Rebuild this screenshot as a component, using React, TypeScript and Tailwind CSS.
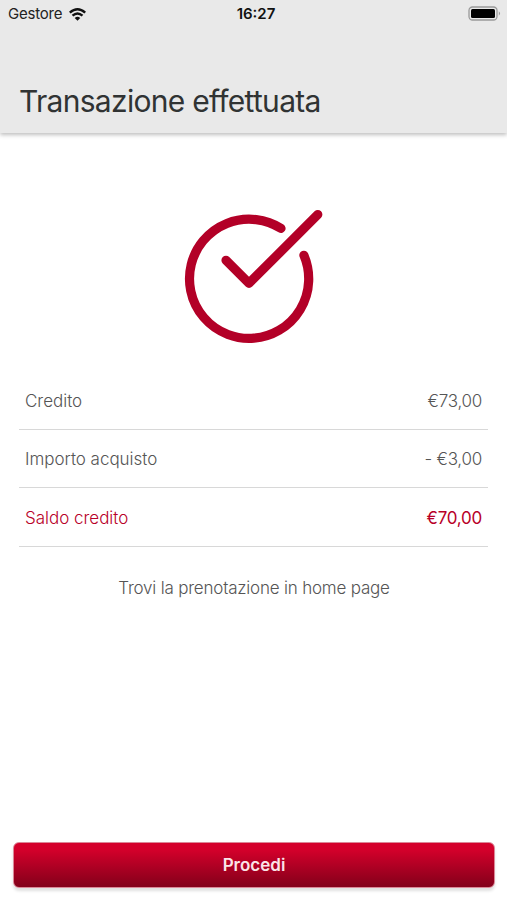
import clsx from 'clsx'

type Row = {
  label: string
  amount: string
  highlighted?: boolean
}

const rows: Row[] = [
  { label: 'Credito', amount: '€73,00' },
  { label: 'Importo acquisto', amount: '- €3,00' },
  { label: 'Saldo credito', amount: '€70,00', highlighted: true },
]

export default function App() {
  return (
    <div className="flex h-[900px] w-[507px] flex-col overflow-hidden bg-white font-['Inter',sans-serif]">
      <header className="h-[133px] shrink-0 bg-[#e9e9e9] shadow-[0_2px_4px_0_rgba(0,0,0,0.25)]">
        <StatusBar />
        <h1 className="mt-[53px] pl-[19px] text-[30px] leading-10 tracking-[-0.7px] text-[#303333]">
          Transazione effettuata
        </h1>
      </header>

      <main className="flex flex-1 flex-col items-center px-[19px]">
        <CheckIcon />
        <ul className="mt-[23px] w-full">
          {rows.map(row => (
            <SummaryRow key={row.label} {...row} />
          ))}
        </ul>
        <p className="mt-[29px] pl-px text-[17px] leading-6 font-light tracking-[-0.2px] text-[#555]">
          Trovi la prenotazione in home page
        </p>
      </main>

      <footer className="px-[13px] pb-3">
        <button className="block h-[46px] w-[482px] rounded-md border border-[#dc8797] bg-linear-to-b from-[#d4002b] from-15% to-[#83001a] pt-[2px] text-[17px] font-semibold text-[#fbe4e8] shadow-[0_3px_3px_rgba(0,0,0,0.12)]">
          Procedi
        </button>
      </footer>
    </div>
  )
}

function StatusBar() {
  return (
    <div className="grid h-7 grid-cols-3 items-center pr-[6px] pl-2 text-[15px] text-[#222]">
      <div className="flex items-center gap-[7px]">
        <span className="tracking-[-0.2px]">Gestore</span>
        <WifiIcon />
      </div>
      <span className="pl-[3px] text-center font-semibold text-[#111]">
        16:27
      </span>
      <BatteryIcon />
    </div>
  )
}

function SummaryRow({ label, amount, highlighted }: Row) {
  return (
    <li
      className={clsx(
        'flex h-[58.6px] items-center justify-between border-b border-[#d8d8d8] px-[6px] pt-[3px] text-[17px]',
        highlighted ? 'text-[#b80028]' : 'text-[#555]',
      )}
    >
      <span className="font-light tracking-[-0.02px]">{label}</span>
      <span
        className={clsx(
          'tracking-[-0.25px]',
          highlighted ? 'font-normal' : 'font-light',
        )}
      >
        {amount}
      </span>
    </li>
  )
}

function CheckIcon() {
  return (
    <svg
      className="mt-[73px] h-[142px] w-[147px]"
      viewBox="0 0 147 142"
      fill="none"
      stroke="#b30027"
      strokeWidth="9.2"
      strokeLinecap="round"
      strokeLinejoin="round"
    >
      <path d="M101 22.4A59.6 59.6 0 1 0 123.9 49.3" />
      <path d="M46 54.3L69 77.3L137.8 8.6" />
    </svg>
  )
}

function WifiIcon() {
  return (
    <svg
      className="h-[13px] w-[17px]"
      viewBox="0 0 17 13"
      fill="none"
      stroke="#111"
      strokeWidth="2.4"
    >
      <path d="M0.8 4.7Q8.5 -2.1 16.2 4.7" />
      <path d="M3.5 7.6Q8.5 3.2 13.5 7.6" />
      <path d="M5.7 10Q8.5 7.6 11.3 10L8.5 12.7Z" fill="#111" stroke="none" />
    </svg>
  )
}

function BatteryIcon() {
  return (
    <svg
      className="-mt-[2px] h-[15px] w-[33px] justify-self-end"
      viewBox="0 0 33 15"
      fill="none"
    >
      <rect x="1" y="1" width="28" height="13" rx="3.5" stroke="#999" strokeWidth="1.3" />
      <rect x="3" y="3" width="24" height="9" rx="1.5" fill="#000" />
      <path d="M30.8 5.3Q33.2 7.5 30.8 9.7Z" fill="#999" />
    </svg>
  )
}
